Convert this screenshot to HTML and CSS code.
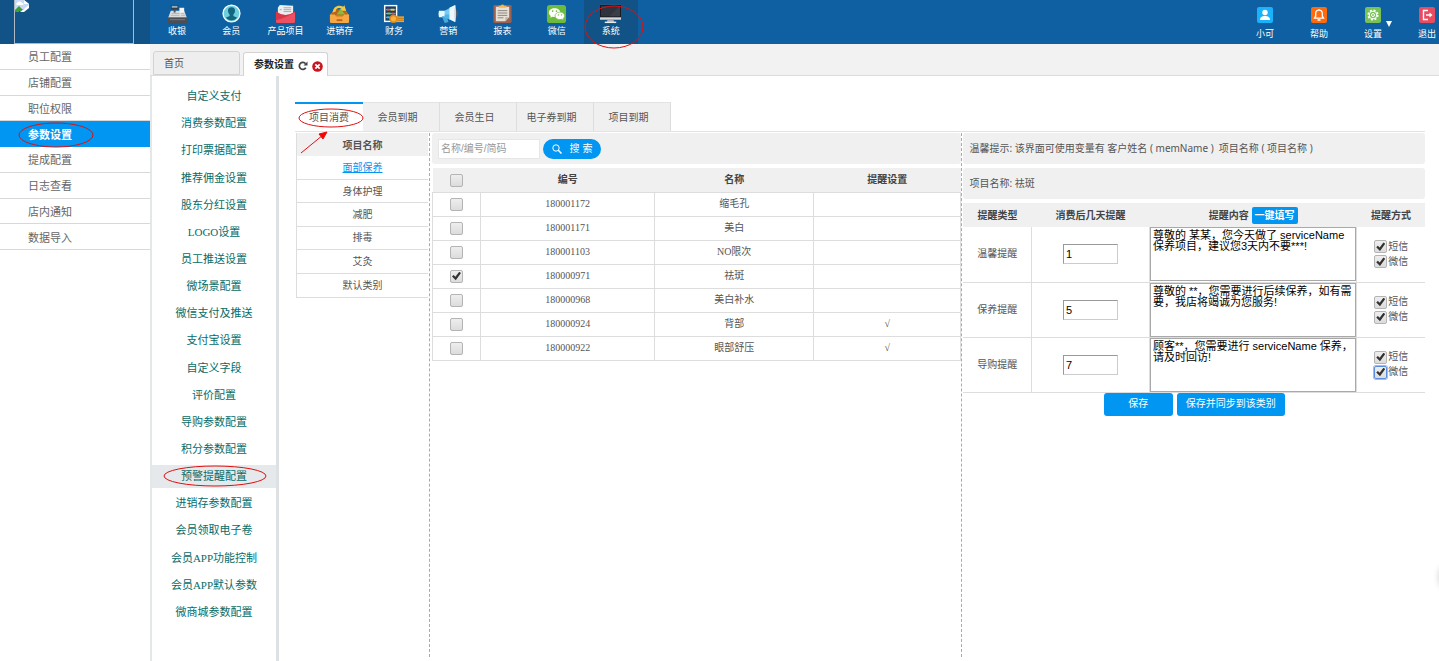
FILE: index.html
```html
<!DOCTYPE html>
<html lang="zh-CN">
<head>
<meta charset="utf-8">
<title>参数设置</title>
<link rel="stylesheet" href="styles.css">
</head>
<body>
<header class="topbar">
  <div class="logo"><div class="logo-box">
    <svg width="14" height="12" viewBox="0 0 14 12"><path d="M0 0h9l5 4v3L2 12H0z" fill="#c6d9f5"/><path d="M9 0v4h5z" fill="#fff"/><path d="M0 10l4-4 4 4-6 2H0z" fill="#3f9c35"/><path d="M2 3c1-2 4-2 5 0 2 0 2 2 1 2H2C1 5 1 3 2 3z" fill="#fff"/><path d="M5 12l9-7v3l-5 4z" fill="#fff"/></svg>
  </div></div>
  <nav class="mainnav">
    <a href="#"><svg viewBox="0 0 22 22"><path d="M4 8h14l3 8H1z" fill="#d9dcdd"/><path d="M1 15h20v6H1z" fill="#4b4f55"/><path d="M3 17h16v1H3z" fill="#777c82"/><path d="M4 2h8v5H4z" fill="#34424e"/><path d="M5 3h6v2H5z" fill="#8fb0c4"/><path d="M7 7h2v3H7z" fill="#555"/><path d="M13 5h5v5h-5z" fill="#f4f4f4"/><path d="M5 11h8M4 13h9M15 11h3M15 13h4" stroke="#b3b8bb" stroke-width="1"/></svg>收银</a>
    <a href="#"><svg viewBox="0 0 22 22"><circle cx="11" cy="11" r="9.500" fill="#fff"/><circle cx="11" cy="11" r="8.200" fill="#6fd0dd"/><path d="M11 4.500c3 0 4 2 3.600 4.500-.2 1.600-1 2.400-1.600 3v1.500l4 2a8 8 0 0 1-12 0l4-2V12c-.6-.6-1.400-1.400-1.600-3C7 6.500 8 4.500 11 4.500z" fill="#14657f"/></svg>会员</a>
    <a href="#"><svg viewBox="0 0 22 22"><path d="M5 2l14 1v12H3V5z" fill="#eceff0"/><path d="M9 5h8M9 7h8M9 9h8M5 7h2" stroke="#a4a9ac"/><path d="M1 9q10 7 20 0v10q0 2-2 2H3q-2 0-2-2z" fill="#d93648"/><path d="M1 18q9-2 20-8v9q0 2-2 2H3q-2 0-2-2z" fill="#ec5061"/></svg>产品项目</a>
    <a href="#"><svg viewBox="0 0 22 22"><path d="M5 7h12l4 6v6q0 2-2 2H3q-2 0-2-2v-6z" fill="#e78d2e"/><path d="M5 7h12l3 6H2z" fill="#b9641b"/><path d="M4 10c0-6 6-9 11-6l1-2 2 6-6 0 1-2c-3-2-6 0-6 3z" fill="#f3c941"/><path d="M8 12l4-6 5 6z" fill="#8aba3a"/><path d="M1 12h5l2 3h6l2-3h5v7q0 2-2 2H3q-2 0-2-2z" fill="#f5a843"/><path d="M8 17h6v2H8z" fill="#b9641b"/></svg>进销存</a>
    <a href="#"><svg viewBox="0 0 22 22"><path d="M1 2h14v18H1z" fill="#fff"/><path d="M2.500 3.500h11v15h-11z" fill="#173f64"/><path d="M3 7h10M3 11h10M3 15h8" stroke="#fff" stroke-width=".6"/><path d="M4 6h3v2H4z" fill="#f04d4d"/><path d="M8 6h4v2H8z" fill="#f8cb3d"/><path d="M4 10h4v2H4z" fill="#78c64a"/><path d="M9 10h3v2H9z" fill="#f04d4d"/><path d="M4 14h3v2H4z" fill="#3cb5ed"/><path d="M14 14h8v6h-8z" fill="#f5a52b"/><path d="M15 16h7M15 18h7" stroke="#c57312"/><circle cx="11" cy="16.500" r="4.500" fill="#e08a19"/><circle cx="11" cy="16.500" r="2.700" fill="#f8b33f"/></svg>财务</a>
    <a href="#"><svg viewBox="0 0 22 22"><path d="M1 8h7v7H1q-1-3.500 0-7z" fill="#e9f7ff"/><path d="M4 14h5l2 6-4 1z" fill="#45a9dc"/><path d="M7 8l11-6v18L7 15z" fill="#74cbf3"/><path d="M7 12h11v8L7 15z" fill="#4fb3e4"/><path d="M12 5l6-3v18l-6-3z" fill="#eef8fd"/><path d="M18 2q2 9 0 18-2-9 0-18z" fill="#cfd9df"/><path d="M19 7q4 4 0 8z" fill="#5c626b"/></svg>营销</a>
    <a href="#"><svg viewBox="0 0 22 22"><rect x="1.500" y="2" width="19" height="19" rx="1.500" fill="#9c6151"/><path d="M4 4h14v11l-4 4H4z" fill="#e6e0d6"/><path d="M18 15l-4 4v-4z" fill="#bbb4a5"/><path d="M7 5V3h2q2-3 4 0h2v2z" fill="#f2b84d"/><path d="M6 8h10M6 10.500h10M6 13h10M6 15.500h6" stroke="#8a847e"/></svg>报表</a>
    <a href="#"><svg viewBox="0 0 22 22"><rect x="1" y="2" width="20" height="19" rx="3" fill="#6cbb3c"/><path d="M9 5.500c-3.500 0-6 2-6 4.500 0 1.500.8 2.600 2 3.500l-.5 2 2.300-1.200 2.200.3c3.500 0 6-2.100 6-4.600s-2.500-4.500-6-4.500z" fill="#fff"/><path d="M14.500 9.500c3 0 5 1.800 5 4 0 1.200-.7 2.200-1.700 3l.4 1.500-1.800-.9-1.900.3c-2.900 0-5-1.800-5-3.900s2.100-4 5-4z" fill="#fff" stroke="#6cbb3c" stroke-width=".7"/><g fill="#6cbb3c"><circle cx="7" cy="8.500" r=".9"/><circle cx="11" cy="8.500" r=".9"/><circle cx="13" cy="12.500" r=".7"/><circle cx="16.300" cy="12.500" r=".7"/></g></svg>微信</a>
    <a href="#" class="on"><svg viewBox="0 0 22 22"><path d="M0 2h22v15.500H0z" fill="#d4d8da"/><path d="M0 2h22v13H0z" fill="#17181e"/><path d="M1 3h20v11H1z" fill="#30323e"/><path d="M21 3v11H10z" fill="#3b3d49"/><path d="M8 17.500h6l1 2.500H7z" fill="#aab0b4"/><path d="M5 19.500h12v1.500H5z" fill="#e8ebec"/></svg>系统
      <svg class="mark mark-system" viewBox="0 0 60 44"><ellipse cx="30" cy="22" rx="29" ry="21"/></svg></a>
  </nav>
  <nav class="usernav">
    <a href="#"><svg viewBox="0 0 16 16"><rect width="16" height="16" rx="2" fill="#1ab2fa"/><circle cx="8" cy="5.500" r="2.700" fill="#fff"/><path d="M3 13c0-3 2-4 5-4s5 1 5 4z" fill="#fff"/></svg>小可</a>
    <a href="#"><svg viewBox="0 0 16 16"><rect width="16" height="16" rx="2" fill="#ff6a0d"/><path d="M3.500 11.200h9l-1.200-2V6.500a3.300 3.300 0 0 0-6.600 0v2.700zM6.500 13h3M8 2v1.500" fill="none" stroke="#fff" stroke-width="1.300"/></svg>帮助</a>
    <a href="#"><svg viewBox="0 0 16 16"><rect width="16" height="16" rx="2" fill="#78c257"/><circle cx="8" cy="8" r="4.800" fill="none" stroke="#fff" stroke-width="1.600" stroke-dasharray="2 1.770"/><circle cx="8" cy="8" r="3.800" fill="none" stroke="#fff"/><circle cx="8" cy="8" r="1.500" fill="none" stroke="#fff"/></svg>设置<span class="caret"></span></a>
    <a href="#"><svg viewBox="0 0 16 16"><rect width="16" height="16" rx="2" fill="#e84c61"/><path d="M9 3.500H4.500v9H9M7 8h5" fill="none" stroke="#fff" stroke-width="1.400"/><path d="M10.500 5.500L13.500 8l-3 2.500z" fill="#fff"/></svg>退出</a>
  </nav>
</header>
<div class="shell">
  <nav class="side">
    <a href="#">员工配置</a><a href="#">店铺配置</a><a href="#">职位权限</a>
    <a href="#" class="on">参数设置<svg class="mark mark-side" viewBox="0 0 76 26"><ellipse cx="38" cy="13" rx="37" ry="12"/></svg></a>
    <a href="#">提成配置</a><a href="#">日志查看</a><a href="#">店内通知</a><a href="#">数据导入</a>
  </nav>
  <div class="work">
    <div class="pagetabs">
      <a href="#" class="pagetab">首页</a>
      <div class="pagetab on">参数设置
        <button class="iconbtn" aria-label="刷新"><svg width="10" height="10" viewBox="0 0 10 10"><path d="M7.800 6.800A3.500 3.500 0 1 1 7.600 2.800" fill="none" stroke="#444" stroke-width="1.700"/><path d="M9.500.5v4h-4z" fill="#444"/></svg></button>
        <button class="iconbtn" aria-label="关闭"><svg width="11" height="11" viewBox="0 0 11 11"><circle cx="5.500" cy="5.500" r="5.300" fill="#c9141e"/><path d="M3.300 3.300l4.400 4.400M7.700 3.300L3.300 7.700" stroke="#fff" stroke-width="1.700"/></svg></button>
      </div>
    </div>
    <div class="panes">
      <nav class="subnav">
        <a href="#"><span>自定义支付</span></a><a href="#"><span>消费参数配置</span></a><a href="#"><span>打印票据配置</span></a><a href="#"><span>推荐佣金设置</span></a><a href="#"><span>股东分红设置</span></a><a href="#"><span>LOGO设置</span></a><a href="#"><span>员工推送设置</span></a><a href="#"><span>微场景配置</span></a><a href="#"><span>微信支付及推送</span></a><a href="#"><span>支付宝设置</span></a><a href="#"><span>自定义字段</span></a><a href="#"><span>评价配置</span></a><a href="#"><span>导购参数配置</span></a><a href="#"><span>积分参数配置</span></a>
        <a href="#" class="on"><span>预警提醒配置</span><svg class="mark mark-sub" viewBox="0 0 104 22"><ellipse cx="52" cy="11" rx="51" ry="10"/></svg></a>
        <a href="#"><span>进销存参数配置</span></a><a href="#"><span>会员领取电子卷</span></a><a href="#"><span>会员APP功能控制</span></a><a href="#"><span>会员APP默认参数</span></a><a href="#"><span>微商城参数配置</span></a>
      </nav>
      <main class="content">
        <div class="tabs">
          <button class="tab on">项目消费<svg class="mark mark-tab" viewBox="0 0 66 36"><ellipse cx="33" cy="10" rx="32" ry="9"/><path d="M3 45L25 27"/><path class="tip" d="M29 24l-8 2 4 5z"/></svg></button>
          <button class="tab">会员到期</button><button class="tab">会员生日</button><button class="tab">电子券到期</button><button class="tab">项目到期</button>
        </div>
        <div class="columns">
          <section class="cats">
            <div class="catlist">
              <h2>项目名称</h2>
              <a href="#" class="on">面部保养</a><a href="#">身体护理</a><a href="#">减肥</a><a href="#">排毒</a><a href="#">艾灸</a><a href="#">默认类别</a>
            </div>
          </section>
          <section class="items">
            <form class="bar search">
              <input type="text" placeholder="名称/编号/简码" aria-label="名称/编号/简码">
              <button type="button"><svg width="10" height="10" viewBox="0 0 10 10"><circle cx="4" cy="4" r="3.200" fill="none" stroke="#fff"/><path d="M6.300 6.300L9.500 9.500" stroke="#fff" stroke-width="1.500"/></svg><span>搜 索</span></button>
            </form>
            <table class="grid">
              <colgroup><col class="c-check"><col class="c-code"><col class="c-name"><col class="c-set"></colgroup>
              <thead><tr><th><input type="checkbox" aria-label="全选"></th><th>编号</th><th>名称</th><th>提醒设置</th></tr></thead>
              <tbody>
                <tr><td><input type="checkbox" aria-label="缩毛孔"></td><td>180001172</td><td>缩毛孔</td><td></td></tr>
                <tr><td><input type="checkbox" aria-label="美白"></td><td>180001171</td><td>美白</td><td></td></tr>
                <tr><td><input type="checkbox" aria-label="NO限次"></td><td>180001103</td><td>NO限次</td><td></td></tr>
                <tr><td><input type="checkbox" aria-label="祛斑" checked></td><td>180000971</td><td>祛斑</td><td></td></tr>
                <tr><td><input type="checkbox" aria-label="美白补水"></td><td>180000968</td><td>美白补水</td><td></td></tr>
                <tr><td><input type="checkbox" aria-label="背部"></td><td>180000924</td><td>背部</td><td>√</td></tr>
                <tr><td><input type="checkbox" aria-label="眼部舒压"></td><td>180000922</td><td>眼部舒压</td><td>√</td></tr>
              </tbody>
            </table>
          </section>
          <section class="remind">
            <p class="bar">温馨提示: 该界面可使用变量有 客户姓名 ( memName )&nbsp; 项目名称 ( 项目名称 )</p>
            <p class="bar">项目名称: 祛斑</p>
            <table class="grid rules">
              <colgroup><col class="r-type"><col class="r-days"><col class="r-text"><col class="r-way"></colgroup>
              <thead><tr><th>提醒类型</th><th>消费后几天提醒</th><th>提醒内容 <button class="fill">一键填写</button></th><th>提醒方式</th></tr></thead>
              <tbody>
                <tr><td>温馨提醒</td><td><input type="text" value="1" aria-label="温馨提醒天数"></td><td><textarea aria-label="温馨提醒内容">尊敬的 某某，您今天做了 serviceName 保养项目，建议您3天内不要***!</textarea></td><td><label><input type="checkbox" checked>短信</label><label><input type="checkbox" checked>微信</label></td></tr>
                <tr><td>保养提醒</td><td><input type="text" value="5" aria-label="保养提醒天数"></td><td><textarea aria-label="保养提醒内容">尊敬的 **，您需要进行后续保养，如有需要，我店将竭诚为您服务!</textarea></td><td><label><input type="checkbox" checked>短信</label><label><input type="checkbox" checked>微信</label></td></tr>
                <tr><td>导购提醒</td><td><input type="text" value="7" aria-label="导购提醒天数"></td><td><textarea aria-label="导购提醒内容">顾客**，您需要进行 serviceName 保养，请及时回访!</textarea></td><td><label><input type="checkbox" checked>短信</label><label><input type="checkbox" class="focused" checked>微信</label></td></tr>
              </tbody>
            </table>
            <div class="actions"><button class="save">保存</button><button>保存并同步到该类别</button></div>
          </section>
        </div>
      </main>
    </div>
  </div>
</div>
<div class="drawer-handle"></div>
</body>
</html>
```
FILE: styles.css
```css
* { box-sizing: border-box; }
body {
  margin: 0;
  min-height: 100vh;
  display: flex;
  flex-direction: column;
  position: relative;
  overflow: hidden;
  background: #fff;
  color: #555;
  font: 10px/16px "Liberation Sans", "Noto Sans CJK SC", sans-serif;
}
a { color: inherit; text-decoration: none; }
button, input, textarea { font: inherit; margin: 0; }
button { border: 0; padding: 0; cursor: pointer; }
h2, p { margin: 0; }

.mark { position: absolute; overflow: visible; fill: none; stroke: #e01010; stroke-width: 1; }
.mark .tip { fill: #f00; }

/* top bar */
.topbar { display: flex; height: 44px; background: #0e60a2; color: #fff; }
.logo { width: 150px; padding: 0 16px 0 14px; background: #115387; }
.logo-box { height: 44px; border: 1px solid #aeb9c4; border-top: 0; }
.logo-box svg { display: block; }
.mainnav { display: grid; grid-template-columns: repeat(9, 1fr); width: 488px; }
.topbar a {
  position: relative;
  display: flex;
  flex-direction: column;
  align-items: center;
  font-size: 9px;
  line-height: 14px;
  white-space: nowrap;
}
.mainnav a { padding-top: 3px; }
.mainnav a > svg:first-child { width: 21px; height: 21px; }
.mainnav .on { background: #115387; }
.mark-system { width: 60px; height: 44px; left: 0; top: 5px; z-index: 2; }
.usernav { display: grid; grid-template-columns: repeat(4, 54px); margin: 0 -15px 0 auto; }
.usernav a { padding-top: 7px; gap: 4px; }
.usernav svg { width: 16px; height: 16px; }
.caret { position: absolute; right: 8px; top: 21px; border: 3px solid transparent; border-top: 6px solid #fff; border-bottom: 0; }

/* left menu */
.shell { flex: 1; display: flex; }
.side { width: 150px; display: grid; grid-template-rows: repeat(8, 1fr); align-self: flex-start; min-height: 206px; font-size: 11px; color: #666; }
.side a { position: relative; display: flex; align-items: center; padding: 2px 0 0 28px; border-bottom: 1px solid #d8d8d8; }
.side .on { background: #0096f2; color: #fff; font-weight: bold; border-color: #0096f2; }
.mark-side { width: 76px; height: 26px; left: 18px; top: 1px; }

/* page tabs */
.work { flex: 1; min-width: 0; display: flex; flex-direction: column; }
.pagetabs { display: flex; align-items: flex-end; gap: 3px; height: 32px; padding-left: 3px; background: #f2f2f2; border-bottom: 1px solid #dcdcdc; }
.pagetab { width: 87px; height: 24px; padding: 0 10px; line-height: 24px; border: 1px solid #d3d3d3; border-radius: 3px 3px 0 0; background: #eee; }
.pagetab.on { display: flex; align-items: center; gap: 4px; width: auto; padding: 0 4px 0 10px; margin-bottom: -1px; background: #fff; border-bottom: 0; color: #222; font-weight: bold; }
.iconbtn { background: none; display: flex; padding-top: 3px; }

/* second menu */
.panes { flex: 1; display: flex; }
.subnav {
  width: 129px;
  display: grid;
  grid-template-rows: repeat(20, 1fr);
  align-content: start;
  padding: 7px 0 35px;
  border-left: 2px solid #e4e7e8;
  border-right: 3px solid #dde1e3;
  font: 11px/23px "Liberation Serif", "Noto Sans CJK SC", sans-serif;
  color: #066c68;
  text-align: center;
}
.subnav a { position: relative; display: flex; flex-direction: column; justify-content: center; }
.subnav .on span { background: #e6e9ec; }
.mark-sub { width: 104px; height: 22px; left: 11px; top: 2px; }

/* content */
.content { flex: 1; min-width: 0; display: flex; flex-direction: column; padding: 26px 14px 4px 16px; }
.tabs { display: flex; border-bottom: 1px solid #e3e3e3; }
.tab { width: 77px; height: 29px; padding: 2px 7px 0 0; border-top: 1px solid #e3e3e3; border-right: 1px solid #ddd; background: #f0f0f0; color: #555; }
.tab.on { position: relative; width: 68px; padding: 0; border-top: 2px solid #0096f2; border-right: 0; background: #fff; }
.mark-tab { width: 66px; height: 36px; left: 3px; top: 4px; }
.columns { flex: 1; display: grid; grid-template-columns: 135px 533fr 463fr; padding-top: 1px; }
.cats { padding: 0 1px; border-right: 1px dashed #aaa; }
.catlist { display: grid; grid-template-rows: repeat(7, 1fr); min-height: 165px; border: 1px solid #ddd; border-top: 0; border-right: 0; text-align: center; }
.catlist h2 { display: grid; place-items: center; padding-top: 2px; font-size: 10px; background: #f0f0f0; }
.catlist a { display: grid; place-items: center; padding-top: 1px; border-bottom: 1px solid #ddd; }
.catlist a:last-child { border-bottom: 0; }
.catlist .on { color: #0096f2; text-decoration: underline; }

.bar { height: 31px; margin-bottom: 4px; padding: 0 6px; line-height: 31px; background: #f0f0f0; border-radius: 3px; }
.items { padding-left: 2px; border-right: 1px dashed #aaa; }
.search { display: flex; align-items: center; gap: 3px; }
.search input { width: 102px; height: 20px; padding: 0 2px; border: 1px solid #e6e6e6; background: #fff; }
.search input::placeholder { color: #999; }
.search button { display: flex; align-items: center; justify-content: center; gap: 8px; width: 58px; height: 20px; border-radius: 10px; background: #0096f2; color: #fff; line-height: 20px; }

.grid { width: 100%; table-layout: fixed; border-collapse: collapse; }
.grid th, .grid td { height: 24px; padding: 0; text-align: center; line-height: 16px; }
.grid th { padding-top: 1px; background: #f0f0f0; color: #444; }
.grid td { border: 1px solid #ddd; font-family: "Liberation Serif", "Noto Sans CJK SC", sans-serif; }
.grid .c-check { width: 48px; }
.grid .c-code { width: 33%; }
.grid .c-name { width: 30%; }
.grid [type="checkbox"] { display: block; margin: 0 auto; }

[type="checkbox"] {
  appearance: none;
  position: relative;
  width: 13px;
  height: 13px;
  border: 1px solid #b4b4b4;
  border-radius: 2px;
  background: linear-gradient(#eee, #dcdcdc);
}
[type="checkbox"]:checked::before {
  content: "";
  position: absolute;
  inset: 1px;
  background: #333;
  clip-path: polygon(0 55%, 18% 38%, 38% 58%, 80% 4%, 100% 18%, 42% 98%);
}
[type="checkbox"].focused { border-color: #5a8de0; box-shadow: 0 0 0 1px #9dbdf2; }

.remind { padding-left: 1px; }
.remind .bar { font-family: "Noto Sans", "Noto Sans CJK SC", sans-serif; }
.remind .grid .r-type { width: 68px; }
.remind .grid .r-days { width: 118px; }
.remind .grid .r-way { width: 68px; }
.rules td { height: 55px; border-width: 0 1px 1px 0; }
.rules td:last-child { border-right: 0; }
.rules td [type="text"] { width: 55px; height: 20px; padding: 0 2px; border: 1px solid #ccc; border-top-color: #999; border-left-color: #999; font: 11px/18px "Liberation Sans", sans-serif; color: #000; }
.rules textarea { display: block; width: 100%; height: 54px; padding: 2px; border: 1px solid #a9a9a9; resize: none; overflow: hidden; color: #000; font: 11px/11px "Liberation Sans", "Noto Sans CJK SC", sans-serif; }
.rules label { display: flex; align-items: center; justify-content: center; gap: 1px; height: 15px; }
.rules label [type="checkbox"] { margin: 0; }
.fill { height: 17px; padding: 0 3px; border-radius: 2px; background: #0096f2; color: #fff; line-height: 17px; }
.actions { display: flex; justify-content: center; gap: 4px; }
.actions button { height: 23px; padding: 0 9px; border-radius: 3px; background: #0096f2; color: #fff; }
.actions .save { width: 69px; }

.drawer-handle { position: absolute; right: -24px; top: 563px; width: 24px; height: 28px; border-radius: 50%; box-shadow: 0 0 6px #ccc; }
```
